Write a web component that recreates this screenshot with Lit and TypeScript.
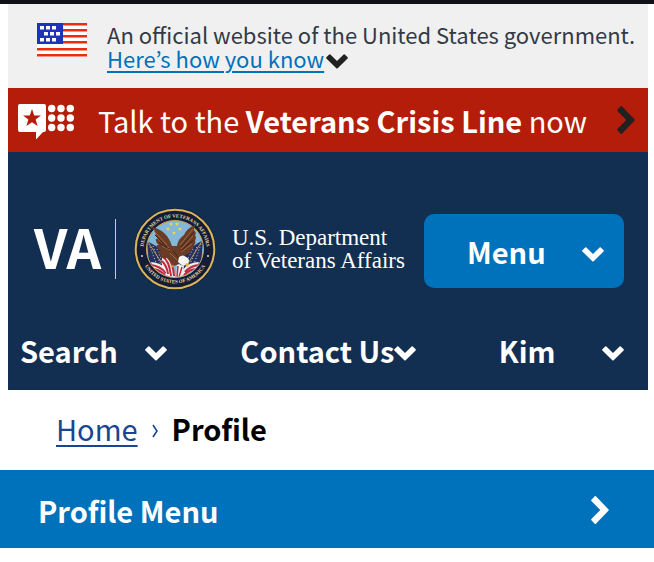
import { LitElement, html, css, svg } from "lit";
import { customElement, property } from "lit/decorators.js";

@customElement("va-chevron")
class VaChevron extends LitElement {
  @property({ reflect: true }) direction: "down" | "right" = "down";

  static styles = css`
    :host { display: inline-flex; flex: none; width: 22px; height: 15px; margin-top: 6px; }
    :host([direction="right"]) { width: 18px; height: 28px; margin-top: 0; }
    svg { display: block; width: 100%; height: 100%; fill: currentColor; }
  `;

  render() {
    return this.direction === "down"
      ? html`<svg viewBox="0 0 22 15" aria-hidden="true"><path d="M3.200.4.4 3.200q-.6.6 0 1.200l9.900 9.900q.7.6 1.400 0l9.900-9.900q.6-.6 0-1.200L18.800.4q-.6-.5-1.200 0L11 7 4.400.4q-.6-.5-1.200 0Z"/></svg>`
      : html`<svg viewBox="0 0 18 28" aria-hidden="true"><path d="M3.700.3.4 3.700q-.6.6 0 1.200L9.300 14 .4 23.100q-.6.6 0 1.200l3.300 3.400q.6.5 1.200 0L17.600 14.600q.5-.6 0-1.200L4.900.3q-.6-.5-1.200 0Z"/></svg>`;
  }
}

@customElement("va-seal")
class VaSeal extends LitElement {
  static styles = css`
    :host { display: block; flex: none; width: 82px; height: 82px; }
    svg { display: block; width: 100%; height: 100%; }
    text { font: 700 5px "Liberation Serif", serif; fill: #e6dcae; }
  `;

  private star(x: number, y: number) {
    const points = Array.from({ length: 10 }, (_, i) => {
      const a = (i * Math.PI) / 5 - Math.PI / 2;
      const d = i % 2 ? 1 : 2.3;
      return `${x + d * Math.cos(a)},${y + d * Math.sin(a)}`;
    }).join(" ");
    return svg`<polygon points=${points} fill="#ecd74e" />`;
  }

  render() {
    return html`<svg viewBox="0 0 82 82" role="img" aria-label="Seal of the Department of Veterans Affairs">
      <defs>
        <clipPath id="disc"><circle cx="41" cy="41" r="28" /></clipPath>
        <path id="upper" d="M12 53A31.400 31.400 0 1 1 70 53" />
        <path id="lower" d="M6.100 43A35 35 0 0 0 75.900 43" />
      </defs>
      <circle cx="41" cy="41" r="41" fill="#161d35" />
      <circle cx="41" cy="41" r="39.300" fill="#151c36" stroke="#d9b65c" stroke-width="2" />
      <circle cx="41" cy="41" r="28.500" fill="#84b7d8" stroke="#c6a65a" stroke-width="1" />
      <text><textPath href="#upper" startOffset="50%" text-anchor="middle">DEPARTMENT OF VETERANS AFFAIRS</textPath></text>
      <text><textPath href="#lower" startOffset="50%" text-anchor="middle">UNITED STATES OF AMERICA</textPath></text>
      <circle cx="8" cy="48" r="1" fill="#e6dcae" /><circle cx="74" cy="48" r="1" fill="#e6dcae" />
      <g clip-path="url(#disc)">
        <path d="m13 33 16 9 8 12-8 10-14-8Z" fill="#26305f" />
        <path d="m69 32-16 10-9 12 9 9 14-6Z" fill="#26305f" />
        <path d="m15 36 9 24M19 38l9 22M23 41l7 17M67 36l-8 23M63 39l-8 20M59 41l-7 13" stroke="#c9cde0" stroke-width="1" stroke-dasharray="1 2" />
        <path d="M14 34 31 60M68 33 50 62" stroke="#b99a55" stroke-width="1" />
        <path d="M17 54q10 0 18 10l-2 4-14-8ZM65 54q-10 0-16 8l-2 6 16-8Z" fill="#f1eef0" />
        <path d="M17 57q9 1 15 8M20 61q6 1 11 6M65 57q-9 1-14 7M62 61q-6 0-12 6" fill="none" stroke="#bd2840" stroke-width="2" />
        <path d="M28 47q8 2 11 10l2 13-6-1-7-11Z" fill="#f4f1f2" />
        <path d="M29 49q6 3 8 19M28 53q5 5 6 13M34 49q5 6 6 19" fill="none" stroke="#c3283d" stroke-width="2" />
        <path d="m43 56 7 2-3 12h-5Z" fill="#f4f1f2" />
        <path d="m44 58-1 11M48 59l-3 10" stroke="#c3283d" stroke-width="1.500" />
      </g>
      <path d="M17 19q7 1 12 5 5 4 7 9l2 5 5 0q1-7 7-11 3-7 11-10-1 3-1 5 3 3 1 5 2 3 0 5 1 3-1 5 0 4-3 5-1 4-5 4-2 3-5 5l-2 5-5 2-7-8q-6 1-7-2l3-1q-5 0-5-4l3 0q-5-3-4-6l2 0q-4-3-3-6l2 0q-3-4-3-8Z" fill="#6b3c25" />
      <path d="m20 23 13 14M23 30l12 10M28 38l8 4M59 21 46 37M59 28 47 41M58 36 47 44M36 45l7 7" fill="none" stroke="#a16b42" stroke-width="1" />
      <path d="m21 27 12 12M25 35l10 6M60 24 47 39M59 32 47 43M39 43l6 7" fill="none" stroke="#3f241b" stroke-width="1" />
      <path d="M45 49q4-3 7 0 3 1 3 4l-1 3-5 2-5-4Z" fill="#f5f5f2" />
      <path d="m52 55 3 1-1 3-3-2ZM36 57l4 1-3 2Z" fill="#e3b440" />
      ${this.star(37, 16)}${this.star(43, 16)}${this.star(34, 21)}${this.star(46, 21)}${this.star(40, 25)}
    </svg>`;
  }
}

@customElement("app-root")
class AppRoot extends LitElement {
  static styles = css`
    :host {
      display: block;
      min-height: 100vh;
      box-sizing: border-box;
      border-top: 4px solid #111217;
      background: #fff;
      color: #000;
      font: 29px/32px "Noto Sans CJK KR", "Open Sans", sans-serif;
    }
    * { box-sizing: border-box; }
    button { border: 0; margin: 0; padding: 0; background: none; color: inherit; font: inherit; cursor: pointer; }
    .top { margin: 0 6px 0 8px; }
    .gov { display: flex; gap: 20px; height: 84px; padding: 18px 12px 0 29px; background: #f0f0f0; color: #323a45; font-size: 22px; line-height: 24px; }
    .flag { flex: none; width: 50px; height: 34px; margin-top: 1px; }
    .gov p { margin: 0; white-space: nowrap; }
    .how { display: flex; align-items: center; gap: 2px; color: #212121; }
    .how span { color: #0071bb; text-decoration: underline; text-decoration-thickness: 2px; text-underline-offset: 3px; }
    .crisis { display: flex; align-items: center; width: 100%; height: 64px; padding: 0 13px 0 10px; background: #b31d09; color: #fff; text-align: left; }
    .crisis svg { flex: none; width: 58px; height: 36px; margin: 4px 22px 0 0; }
    .crisis .label { flex: 1; white-space: nowrap; }
    .crisis va-chevron { color: #212121; }
    header { background: #122e51; color: #fff; padding: 56px 24px 24px 26px; }
    .brand { display: flex; align-items: center; }
    .logo { display: flex; align-items: center; flex: 1; color: #fff; text-decoration: none; }
    .va { width: 66px; padding-bottom: 6px; font-size: 54px; line-height: 54px; font-weight: 700; }
    .rule { width: 1px; height: 60px; margin: 0 18px 0 15px; background: #c4cdd8; }
    .dept { margin-left: 16px; font: 23px/23px "Liberation Serif", serif; white-space: nowrap; }
    .menu { display: flex; align-items: center; justify-content: space-between; width: 200px; height: 74px; margin-top: 4px; padding: 0 20px 0 43px; border-radius: 10px; background: #0071bb; font-weight: 700; }
    nav.utility { display: grid; grid-template-columns: 220fr 258fr 125fr; justify-items: start; margin: 44px 0 0 -14px; font-weight: 700; }
    nav.utility button { display: flex; align-items: center; white-space: nowrap; }
    nav.utility .search { gap: 27px; }
    nav.utility .user { width: 100%; justify-content: space-between; }
    .crumbs { display: flex; align-items: center; gap: 14px; height: 80px; padding: 0 56px 4px; }
    .crumbs a { color: #1a4593; text-underline-offset: 4px; text-decoration-thickness: 2px; }
    .crumbs .sep { padding-top: 6px; color: #1a4593; }
    .crumbs svg { display: block; width: 6px; height: 14px; }
    .profile { display: flex; align-items: center; justify-content: space-between; width: 100%; height: 78px; padding: 2px 45px 0 38px; background: #0071bb; color: #fff; font-weight: 700; }
  `;

  private flag() {
    return html`<svg class="flag" viewBox="0 0 50 34" role="img" aria-label="U.S. flag">
      <path fill="#fff" d="M0 0h50v34H0z" />
      ${[0, 6, 12, 18, 25, 31].map((y) => svg`<path fill="#ee2c0c" d="M0 ${y}h50v2.500H0z" />`)}
      <path fill="#1f33b8" d="M0 0h26v21H0z" />
      ${[[3, 3], [9, 3], [15, 3], [7, 9], [13, 9], [19, 9], [3, 15], [9, 15], [15, 15]].map(
        ([x, y]) => svg`<rect x=${x} y=${y} width="4" height="3.500" fill="#fff" />`
      )}
    </svg>`;
  }

  private crisisIcon() {
    return html`<svg viewBox="0 0 58 36" aria-hidden="true">
      <path fill="#fff" d="M2 0h24q2 0 2 2v24q0 2-2 2h-1l-6 6.500q-1 1-1 0V28H2q-2 0-2-2V2q0-2 2-2Z" />
      <path fill="#b31d09" d="m14 5 2.200 6.400 6.800.1-5.400 4.100 2 6.500L14 18.200l-5.600 3.900 2-6.500L5 11.500l6.800-.1Z" />
      ${[4.5, 14, 23.5].map((y) => [33.7, 43, 52.3].map((x) => svg`<circle cx=${x} cy=${y} r="3.700" fill="#fff" />`))}
    </svg>`;
  }

  render() {
    return html`
      <div class="top">
        <section class="gov">
          ${this.flag()}
          <div>
            <p>An official website of the United States government.</p>
            <button class="how"><span>Here’s how you know</span><va-chevron></va-chevron></button>
          </div>
        </section>
        <button class="crisis">
          ${this.crisisIcon()}
          <span class="label">Talk to the <b>Veterans Crisis Line</b> now</span>
          <va-chevron direction="right"></va-chevron>
        </button>
        <header>
          <div class="brand">
            <a class="logo" href="#">
              <span class="va">VA</span><span class="rule"></span><va-seal></va-seal>
              <span class="dept">U.S. Department<br />of Veterans Affairs</span>
            </a>
            <button class="menu">Menu <va-chevron></va-chevron></button>
          </div>
          <nav class="utility" aria-label="Utility">
            <button class="search">Search <va-chevron></va-chevron></button>
            <button>Contact Us<va-chevron></va-chevron></button>
            <button class="user">Kim <va-chevron></va-chevron></button>
          </nav>
        </header>
      </div>
      <nav class="crumbs" aria-label="Breadcrumb">
        <a href="#">Home</a>
        <span class="sep"><svg viewBox="0 0 6 14" aria-hidden="true"><path d="m1 1 4 6-4 6" fill="none" stroke="currentColor" stroke-width="1.600" /></svg></span>
        <b aria-current="page">Profile</b>
      </nav>
      <button class="profile">Profile Menu <va-chevron direction="right"></va-chevron></button>
    `;
  }
}
